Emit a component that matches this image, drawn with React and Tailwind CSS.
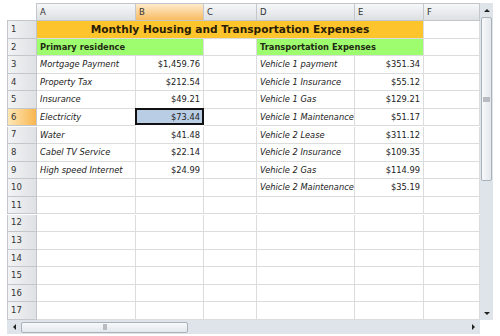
import React from 'react';

const housing = [
  ['Mortgage Payment', '$1,459.76'],
  ['Property Tax', '$212.54'],
  ['Insurance', '$49.21'],
  ['Electricity', '$73.44'],
  ['Water', '$41.48'],
  ['Cabel TV Service', '$22.14'],
  ['High speed Internet', '$24.99'],
];

const transport = [
  ['Vehicle 1 payment', '$351.34'],
  ['Vehicle 1 Insurance', '$55.12'],
  ['Vehicle 1 Gas', '$129.21'],
  ['Vehicle 1 Maintenance', '$51.17'],
  ['Vehicle 2 Lease', '$311.12'],
  ['Vehicle 2 Insurance', '$109.35'],
  ['Vehicle 2 Gas', '$114.99'],
  ['Vehicle 2 Maintenance', '$35.19'],
];

const cell = 'border-r border-b border-[#dadcde] h-[17.4px] flex items-center overflow-hidden whitespace-nowrap';

function RowHead({ n }) {
  const active = n === 6;
  return (
    <div
      className={
        'h-[17.4px] flex items-center pl-[3px] border-b border-r border-l border-[#c3c6ca] text-[8.5px] text-[#333] ' +
        (active
          ? 'bg-gradient-to-r from-[#fde7b4] to-[#f8b64c]'
          : 'bg-gradient-to-r from-[#f2f3f4] to-[#dfe1e4]')
      }
    >
      {n}
    </div>
  );
}

function ColHead({ label, active }) {
  return (
    <div
      className={
        'h-[18px] flex items-center pl-[3px] border-t border-r border-b border-[#c3c6ca] text-[8.5px] text-[#333] ' +
        (active
          ? 'bg-gradient-to-b from-[#fdeacb] to-[#f8bb5e]'
          : 'bg-gradient-to-b from-[#f6f7f8] to-[#dde0e3]')
      }
    >
      {label}
    </div>
  );
}

function Label({ text }) {
  return <div className={cell + ' pl-[3px] italic text-[8.3px] text-[#222]'}>{text}</div>;
}

function Value({ text, selected }) {
  if (selected) {
    return (
      <div className="h-[17.4px] flex items-center justify-end pr-[2px] bg-[#b9cde5] border-2 border-[#111] text-[8.3px] text-[#222] -ml-px -mt-px">
        {text}
      </div>
    );
  }
  return <div className={cell + ' justify-end pr-[3px] text-[8.3px] text-[#222]'}>{text}</div>;
}

function Empty() {
  return <div className={cell}></div>;
}

export default function App() {
  const rows = [];
  for (let r = 3; r <= 17; r++) {
    const h = housing[r - 3];
    const t = transport[r - 3];
    rows.push(
      <React.Fragment key={r}>
        <RowHead n={r} />
        {h ? <Label text={h[0]} /> : <Empty />}
        {h ? <Value text={h[1]} selected={r === 6} /> : <Empty />}
        <Empty />
        {t ? <Label text={t[0]} /> : <Empty />}
        {t ? <Value text={t[1]} /> : <Empty />}
        <Empty />
      </React.Fragment>
    );
  }

  return (
    <div className="w-[500px] h-[336px] bg-white overflow-hidden pt-[3px] pl-[7px] flex font-['DejaVu_Sans',sans-serif]">
      <div className="w-[473px] flex flex-col">
        <div className="grid grid-cols-[30px_99px_68px_53px_98px_69px_56px] h-[317px] overflow-hidden">
          <div className="h-[18px] border-r border-b border-[#c3c6ca]"></div>
          <ColHead label="A" />
          <ColHead label="B" active />
          <ColHead label="C" />
          <ColHead label="D" />
          <ColHead label="E" />
          <ColHead label="F" />

          <RowHead n={1} />
          <div className="col-span-5 h-[17.4px] bg-[#fec42b] border-r border-b border-[#dadcde] flex items-center justify-center pt-[2px] font-bold text-[10.6px] text-[#2a1d05]">
            Monthly Housing and Transportation Expenses
          </div>
          <Empty />

          <RowHead n={2} />
          <div className="col-span-2 h-[17.4px] bg-[#9dfd6e] border-r border-b border-[#dadcde] flex items-center pl-[3px] font-bold text-[8.3px] text-[#1f2a14]">
            Primary residence
          </div>
          <Empty />
          <div className="col-span-2 h-[17.4px] bg-[#9dfd6e] border-r border-b border-[#dadcde] flex items-center pl-[3px] font-bold text-[8.3px] text-[#1f2a14]">
            Transportation Expenses
          </div>
          <Empty />

          {rows}
        </div>

        <div className="h-[14px] bg-[#dfe4ea] flex items-center">
          <div className="w-[14px] flex justify-center items-center">
            <div className="w-0 h-0 border-y-[3px] border-y-transparent border-r-[3px] border-r-[#222]"></div>
          </div>
          <div className="w-[167px] h-[11px] rounded-[2px] border border-[#a9b1bb] bg-gradient-to-b from-[#f7f8fa] to-[#e4e8ec] flex items-center justify-center">
            <div className="w-[4px] h-[6px] bg-[#b8bcc2]"></div>
          </div>
          <div className="flex-1"></div>
          <div className="w-[14px] flex justify-center items-center">
            <div className="w-0 h-0 border-y-[3px] border-y-transparent border-l-[3px] border-l-[#222]"></div>
          </div>
        </div>
      </div>

      <div className="w-[13px] h-[317px] bg-[#dfe4ea] flex flex-col items-center">
        <div className="h-[14px] flex items-center justify-center">
          <div className="w-0 h-0 border-x-[3px] border-x-transparent border-b-[3px] border-b-[#222]"></div>
        </div>
        <div className="w-[11px] h-[164px] rounded-[2px] border border-[#a9b1bb] bg-gradient-to-r from-[#f7f8fa] to-[#e4e8ec] flex flex-col justify-center items-center">
          <div className="w-[7px] h-[5px] bg-[#b8bcc2]"></div>
        </div>
        <div className="flex-1"></div>
        <div className="h-[14px] flex items-center justify-center">
          <div className="w-0 h-0 border-x-[3px] border-x-transparent border-t-[3px] border-t-[#222]"></div>
        </div>
      </div>
    </div>
  );
}
